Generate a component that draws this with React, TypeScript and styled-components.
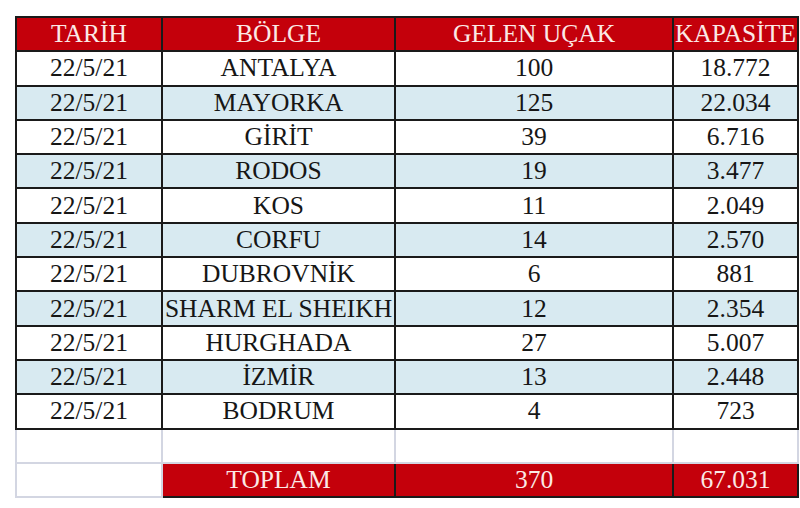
import React from "react";
import styled, { createGlobalStyle, css } from "styled-components";

const Global = createGlobalStyle`
  html, body { margin: 0; padding: 0; background: #ffffff; }
  body { font-family: "Liberation Serif", "Times New Roman", serif; }
`;

const serif = css`
  font-family: "Liberation Serif", "DejaVu Serif", serif;
  font-size: 25.5px;
  font-weight: 400;
`;

const Page = styled.div`
  width: 800px;
  height: 508px;
  padding: 16px 0 0 15px;
  box-sizing: border-box;
  background: #ffffff;
`;

const Table = styled.table`
  border-collapse: collapse;
  table-layout: fixed;
  width: 782px;
  color: #161616;
  ${serif}
`;

const HeadCell = styled.th`
  ${serif}
  background: #c4000b;
  color: #fbe9e6;
  border: 2px solid #1a1a1a;
  height: 32.3px;
  padding: 0;
  text-align: center;
  white-space: nowrap;
  overflow: hidden;
  line-height: 30px;
`;

const Row = styled.tr<{ $shade?: boolean }>`
  background: ${(p) => (p.$shade ? "#d8eaf1" : "#ffffff")};
`;

const Cell = styled.td`
  ${serif}
  color: #161616;
  border: 2px solid #1a1a1a;
  height: 32.3px;
  padding: 0;
  text-align: center;
  white-space: nowrap;
  overflow: visible;
  line-height: 30px;
`;

const BlankCell = styled.td`
  border: 2px solid #d3d6e2;
  height: 32.3px;
  padding: 0;
  background: #ffffff;
`;

const TotalCell = styled.td`
  ${serif}
  border: 2px solid #1a1a1a;
  height: 32.3px;
  padding: 0;
  background: #c4000b;
  color: #fbe9e6;
  text-align: center;
  line-height: 30px;
`;

const rows = [
  ["ANTALYA", "100", "18.772"],
  ["MAYORKA", "125", "22.034"],
  ["GİRİT", "39", "6.716"],
  ["RODOS", "19", "3.477"],
  ["KOS", "11", "2.049"],
  ["CORFU", "14", "2.570"],
  ["DUBROVNİK", "6", "881"],
  ["SHARM EL SHEIKH", "12", "2.354"],
  ["HURGHADA", "27", "5.007"],
  ["İZMİR", "13", "2.448"],
  ["BODRUM", "4", "723"],
];

export default function App() {
  return (
    <>
      <Global />
      <Page>
        <Table>
          <colgroup>
            <col style={{ width: 146 }} />
            <col style={{ width: 233 }} />
            <col style={{ width: 278 }} />
            <col style={{ width: 125 }} />
          </colgroup>
          <thead>
            <tr>
              <HeadCell>TARİH</HeadCell>
              <HeadCell>BÖLGE</HeadCell>
              <HeadCell>GELEN UÇAK</HeadCell>
              <HeadCell>KAPASİTE</HeadCell>
            </tr>
          </thead>
          <tbody>
            {rows.map((r, i) => (
              <Row key={r[0]} $shade={i % 2 === 1}>
                <Cell>22/5/21</Cell>
                <Cell>{r[0]}</Cell>
                <Cell>{r[1]}</Cell>
                <Cell>{r[2]}</Cell>
              </Row>
            ))}
            <tr>
              <BlankCell />
              <BlankCell />
              <BlankCell />
              <BlankCell />
            </tr>
            <tr>
              <BlankCell />
              <TotalCell>TOPLAM</TotalCell>
              <TotalCell>370</TotalCell>
              <TotalCell>67.031</TotalCell>
            </tr>
          </tbody>
        </Table>
      </Page>
    </>
  );
}
